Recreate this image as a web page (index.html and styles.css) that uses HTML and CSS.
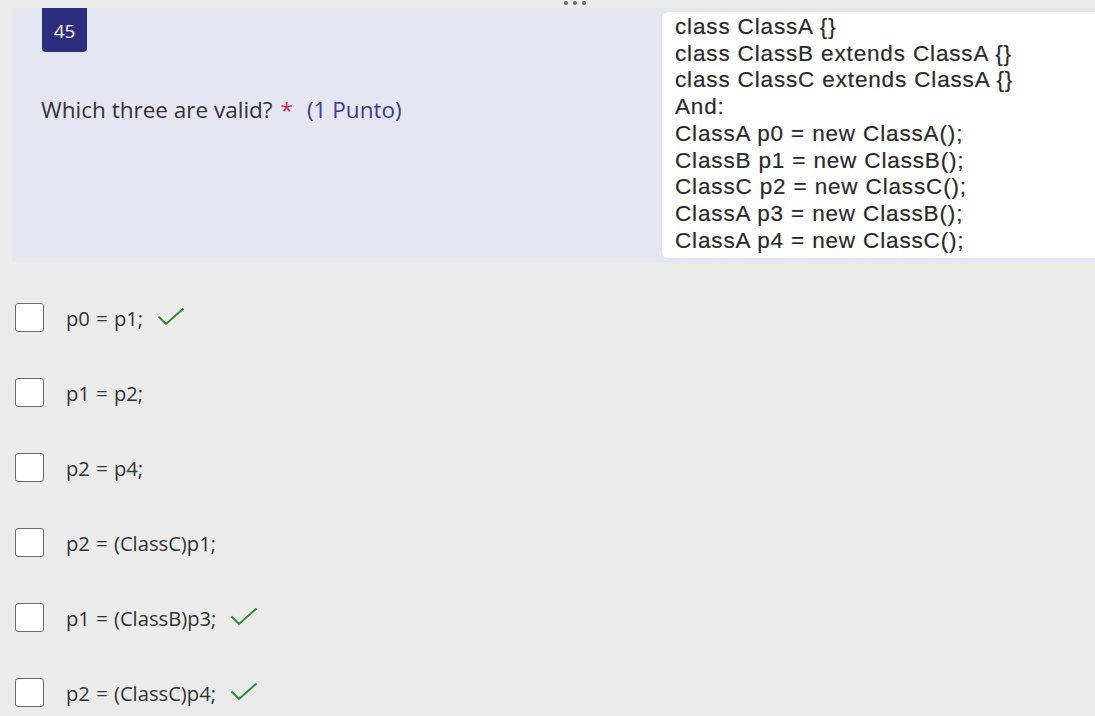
FILE: index.html
```html
<!DOCTYPE html>
<html>
<head>
<meta charset="utf-8">
<link rel="stylesheet" href="styles.css">
</head>
<body>
<div class="page">
  <div class="dots"><span></span><span></span><span></span></div>
  <section class="card">
    <div class="left">
      <div class="badge">45</div>
      <div class="question">Which three are valid?<span class="req">*</span><span class="points">(1 Punto)</span></div>
    </div>
    <div class="code">
      <div>class ClassA {}</div>
      <div>class ClassB extends ClassA {}</div>
      <div>class ClassC extends ClassA {}</div>
      <div>And:</div>
      <div>ClassA p0 = new ClassA();</div>
      <div>ClassB p1 = new ClassB();</div>
      <div>ClassC p2 = new ClassC();</div>
      <div>ClassA p3 = new ClassB();</div>
      <div>ClassA p4 = new ClassC();</div>
    </div>
  </section>
  <ul class="options">
    <li class="option"><span class="box"></span><span class="label">p0 = p1;</span><svg class="check" viewBox="0 0 28 20" width="28" height="20"><path d="M1.5 9.5 L9 17 L26.5 1.5" /></svg></li>
    <li class="option"><span class="box"></span><span class="label">p1 = p2;</span></li>
    <li class="option"><span class="box"></span><span class="label">p2 = p4;</span></li>
    <li class="option"><span class="box"></span><span class="label">p2 = (ClassC)p1;</span></li>
    <li class="option"><span class="box"></span><span class="label">p1 = (ClassB)p3;</span><svg class="check" viewBox="0 0 28 20" width="28" height="20"><path d="M1.5 9.5 L9 17 L26.5 1.5" /></svg></li>
    <li class="option"><span class="box"></span><span class="label">p2 = (ClassC)p4;</span><svg class="check" viewBox="0 0 28 20" width="28" height="20"><path d="M1.5 9.5 L9 17 L26.5 1.5" /></svg></li>
  </ul>
</div>
</body>
</html>
```

FILE: styles.css
```css
* { box-sizing: border-box; }
html, body { margin: 0; padding: 0; }
body {
  background: #ebebeb;
  font-family: "Open Sans", "Noto Sans", sans-serif;
  color: #323232;
  width: 1095px;
  height: 716px;
  overflow: hidden;
}
.page {
  position: relative;
  padding-top: 8px;
}
.dots {
  position: absolute;
  top: 1px;
  left: 564px;
  display: flex;
  gap: 5px;
}
.dots span {
  width: 4px;
  height: 4px;
  border-radius: 50%;
  background: #6a6a6a;
}
.card {
  margin-left: 12px;
  height: 254px;
  background: #e5e6f1;
  border-radius: 3px 0 0 3px;
  display: flex;
  justify-content: space-between;
}
.left {
  padding-left: 30px;
  display: flex;
  flex-direction: column;
}
.badge {
  width: 45px;
  height: 44px;
  background: #2c2d7d;
  color: #fff;
  font-size: 19px;
  display: flex;
  align-items: center;
  justify-content: center;
  border-radius: 0 0 4px 4px;
  padding-top: 2px;
}
.question {
  margin-top: 43px;
  margin-left: -1px;
  font-size: 22.5px;
  line-height: 30px;
  color: #333;
  white-space: nowrap;
}
.req {
  color: #c4314b;
  margin-left: 8px;
}
.points {
  color: #3b3c8c;
  margin-left: 14px;
}
.code {
  margin-top: 4px;
  margin-bottom: 4px;
  width: 433px;
  background: #fff;
  border-radius: 6px 0 0 6px;
  padding: 2px 0 0 13px;
  font-family: "Liberation Sans", Arial, sans-serif;
  font-size: 22.5px;
  line-height: 26.7px;
  color: #2a2a2a;
  letter-spacing: 0.85px;
  -webkit-text-stroke: 0.2px #2a2a2a;
}
.options {
  list-style: none;
  margin: 0;
  padding: 41px 0 0 15px;
  display: flex;
  flex-direction: column;
  gap: 46px;
}
.option {
  display: flex;
  align-items: center;
  height: 29px;
}
.box {
  width: 29px;
  height: 29px;
  background: #fff;
  border: 1px solid #6b6b6b;
  border-radius: 3px;
  flex: none;
}
.label {
  margin-left: 22px;
  font-size: 20.2px;
  color: #333;
  word-spacing: 1px;
}
.check {
  margin-left: 14px;
  margin-top: -2px;
  fill: none;
  stroke: #2f8a37;
  stroke-width: 2;
}
```
